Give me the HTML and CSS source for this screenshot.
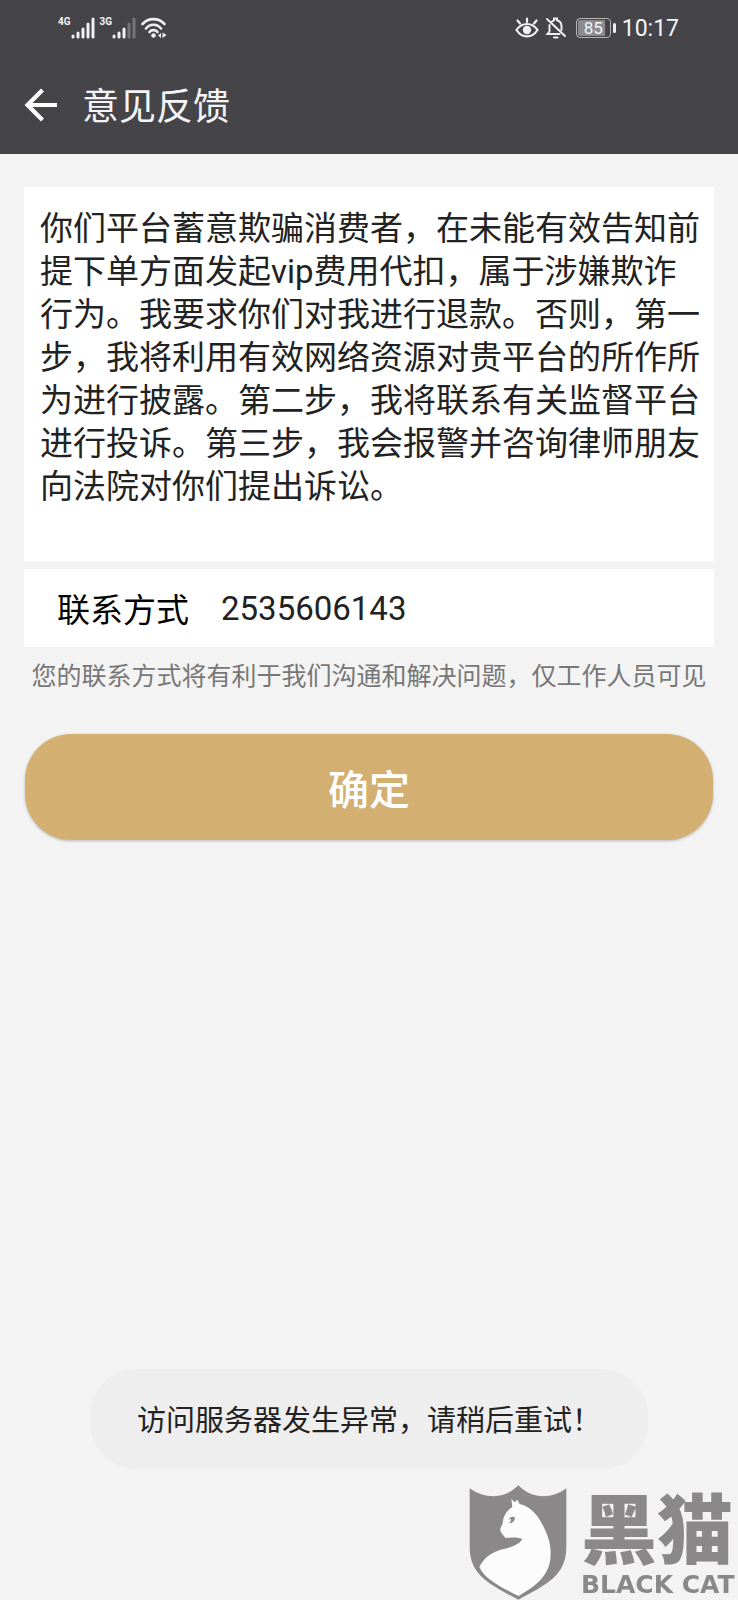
FILE: index.html
```
<!DOCTYPE html>
<html lang="zh-CN">
<head>
  <meta charset="UTF-8" />
  <meta name="viewport" content="width=device-width, initial-scale=1.0"/>
  <title>意见反馈</title>
  <link rel="stylesheet" href="styles.css">
</head>
<body>
  <header class="header">
    <div class="status-bar">
      <div class="status-left">
        <span class="network">4G</span>
        <svg class="signal" width="24" height="22" viewBox="0 0 24 22" stroke="#f0f0f2" stroke-width="3" stroke-linecap="round">
          <path d="M2 20v-1M7 20v-4M12 20v-8M17 20v-13M22 20v-18"/>
        </svg>
        <span class="network">3G</span>
        <svg class="signal" width="24" height="22" viewBox="0 0 24 22" stroke="#f0f0f2" stroke-width="3" stroke-linecap="round">
          <path d="M2 20v-1M7 20v-4M12 20v-8"/>
          <path d="M17 20v-13M22 20v-18" stroke="#77767b"/>
        </svg>
        <svg class="wifi" width="26" height="22" viewBox="0 0 26 22" fill="none" stroke="#f0f0f2" stroke-width="2.6" stroke-linecap="round">
          <path d="M1.500 7C7.500 0.500 17.500 0.500 23.500 7M5 11.500C9 6.500 16 6.500 20 11.500M8.500 15C10.500 12.500 14.500 12.500 16.500 15"/>
          <circle cx="12.500" cy="18.500" r="2.300" fill="#f0f0f2" stroke="none"/>
          <path d="M20 16v5l-3-2.500zM21.500 15.500v5.500l4-3z" fill="#f0f0f2" stroke="none"/>
        </svg>
      </div>
      <div class="status-right">
        <svg width="24" height="22" viewBox="0 0 24 22" fill="none" stroke="#f0f0f2" stroke-width="2.2" stroke-linecap="round">
          <path d="M1.500 13C7 5 17 5 22.500 13C17 21.500 7 21.500 1.500 13z"/>
          <path d="M12 5V1.500M5 6.500L2.500 3.500M19 6.500l2.500-3"/>
          <circle cx="12" cy="13" r="4.200" fill="#f0f0f2" stroke="none"/>
        </svg>
        <svg width="22" height="22" viewBox="0 0 22 22" fill="none" stroke="#f0f0f2" stroke-width="2" stroke-linecap="round">
          <path d="M2 2l18 17M4.500 8v6.500L2.500 17h12M7 4.500l2-1.200V1.500h3v1.800c3 1 4.500 3 4.500 5.700v4"/>
          <path d="M9 20.500h3.500"/>
        </svg>
        <span class="battery"><span class="battery-level">85</span></span>
        <span class="time">10:17</span>
      </div>
    </div>
    <div class="title-bar">
      <button class="back" aria-label="返回">
        <svg width="34" height="34" viewBox="0 0 34 34" fill="none" stroke="#fff" stroke-width="4.200">
          <path d="M33 17H3M18.500 2L3.500 17l15 15"/>
        </svg>
      </button>
      <h1>意见反馈</h1>
    </div>
  </header>

  <main class="form">
    <textarea class="message" aria-label="意见内容" spellcheck="false">你们平台蓄意欺骗消费者，在未能有效告知前提下单方面发起vip费用代扣，属于涉嫌欺诈行为。我要求你们对我进行退款。否则，第一步，我将利用有效网络资源对贵平台的所作所为进行披露。第二步，我将联系有关监督平台进行投诉。第三步，我会报警并咨询律师朋友向法院对你们提出诉讼。</textarea>
    <div class="contact">
      <label for="contact">联系方式</label>
      <input type="text" id="contact" value="2535606143" />
    </div>
    <p class="hint">您的联系方式将有利于我们沟通和解决问题，仅工作人员可见</p>
    <button class="submit">确定</button>
  </main>

  <div class="toast" role="status">访问服务器发生异常，请稍后重试！</div>

  <div class="watermark">
    <svg width="98" height="115" viewBox="86 44 294 345">
      <path fill="#8a8889" d="M88 54C135 88 195 86 234 45C273 86 333 88 378 54V230C378 315 320 342 234 388C148 342 88 315 88 230z"/>
      <path fill="#fcfcfc" d="M213 86L223 96L231 88L238 101C266 107 288 128 302 155C322 190 332 220 331 252C330 305 304 338 235 377C185 352 134 328 117 290C133 258 159 244 190 236C217 229 240 220 246 205C226 200 213 201 196 203C189 196 184 189 180 181C178 173 184 168 187 160C188 139 198 121 216 110z"/>
      <path fill="#8a8889" d="M205 149C209 139 217 137 224 142C223 153 216 160 207 157C213 152 213 148 211 145z"/>
    </svg>
    <div class="watermark-name">
      <span class="watermark-cn">黑猫</span>
      <span class="watermark-en">BLACK CAT</span>
    </div>
  </div>
</body>
</html>
```
FILE: styles.css
```
* {
  box-sizing: border-box;
}

body {
  margin: 0;
  min-height: 100vh;
  background-color: #f3f3f3;
  color: #222;
  font-family: Roboto, 'Noto Sans CJK SC', sans-serif;
}

button,
input,
textarea {
  font-family: inherit;
  border: none;
  outline: none;
  padding: 0;
}

.header {
  background-color: #454449;
  color: #f4f4f6;
}

.status-bar {
  display: flex;
  justify-content: space-between;
  height: 56px;
  padding: 0 59px 0 58px;
}

.status-left,
.status-right {
  display: flex;
  align-items: center;
}

.status-right {
  gap: 6px;
}

.network {
  align-self: flex-start;
  margin-top: 16px;
  font-size: 10px;
  line-height: 12px;
  font-weight: bold;
}

.signal {
  margin-right: 5px;
}

.battery {
  display: flex;
  align-items: center;
  gap: 2px;
  margin-left: 3px;
}

.battery::after {
  content: '';
  width: 3px;
  height: 10px;
  border-radius: 2px;
  background-color: #f0f0f2;
}

.battery-level {
  width: 35px;
  height: 20px;
  border: 1px solid #b4b4b7;
  border-radius: 4px;
  background: linear-gradient(to right, #8c8c90 85%, #454449 85%);
  box-shadow: inset 0 0 0 1px #454449;
  font-size: 17px;
  line-height: 18px;
  text-align: center;
}

.time {
  font-size: 23px;
}

.title-bar {
  display: flex;
  align-items: center;
  gap: 24px;
  height: 98px;
  padding: 0 24px;
}

.back {
  display: flex;
  background: none;
  cursor: pointer;
}

h1 {
  margin: 0;
  padding-top: 6px;
  font-size: 37px;
  line-height: 48px;
  font-weight: normal;
}

.form {
  display: flex;
  flex-direction: column;
  padding: 33px 24px;
}

.message {
  height: 374px;
  padding: 20px 14px 16px 16px;
  overflow: hidden;
  resize: none;
  background-color: #fff;
  color: #222;
  font-size: 33px;
  line-height: 43px;
}

.contact {
  display: flex;
  align-items: center;
  gap: 32px;
  height: 78px;
  margin-top: 8px;
  padding: 0 33px;
  background-color: #fff;
  color: #000;
  font-size: 33px;
}

.contact input {
  flex: 1;
  min-width: 0;
  background: none;
  color: #222;
  font-size: 33px;
}

.hint {
  margin: 13px 0 40px;
  color: #777;
  font-size: 25px;
  line-height: 34px;
  text-align: center;
}

.submit {
  height: 106px;
  margin: 0 1px;
  border-radius: 46px;
  background-color: #d3b071;
  box-shadow: 0 1px 3px rgba(0, 0, 0, 0.25);
  color: #fff;
  font-size: 41px;
  font-weight: 500;
  cursor: pointer;
}

.toast {
  position: fixed;
  bottom: 131px;
  left: 50%;
  transform: translateX(-50%);
  padding: 30px 47px 26px;
  border-radius: 46px;
  background-color: #eee;
  font-size: 29px;
  line-height: 44px;
  white-space: nowrap;
}

.watermark {
  position: fixed;
  right: 0;
  bottom: 0;
  display: flex;
  gap: 14px;
  color: #8a8889;
}

.watermark-name {
  display: flex;
  flex-direction: column;
  width: 157px;
  padding-top: 9px;
}

.watermark-cn {
  font-size: 76px;
  line-height: 76px;
  font-weight: 900;
}

.watermark-en {
  font-family: 'DejaVu Sans', sans-serif;
  font-size: 25px;
  line-height: 30px;
  font-weight: bold;
  white-space: nowrap;
}
```
